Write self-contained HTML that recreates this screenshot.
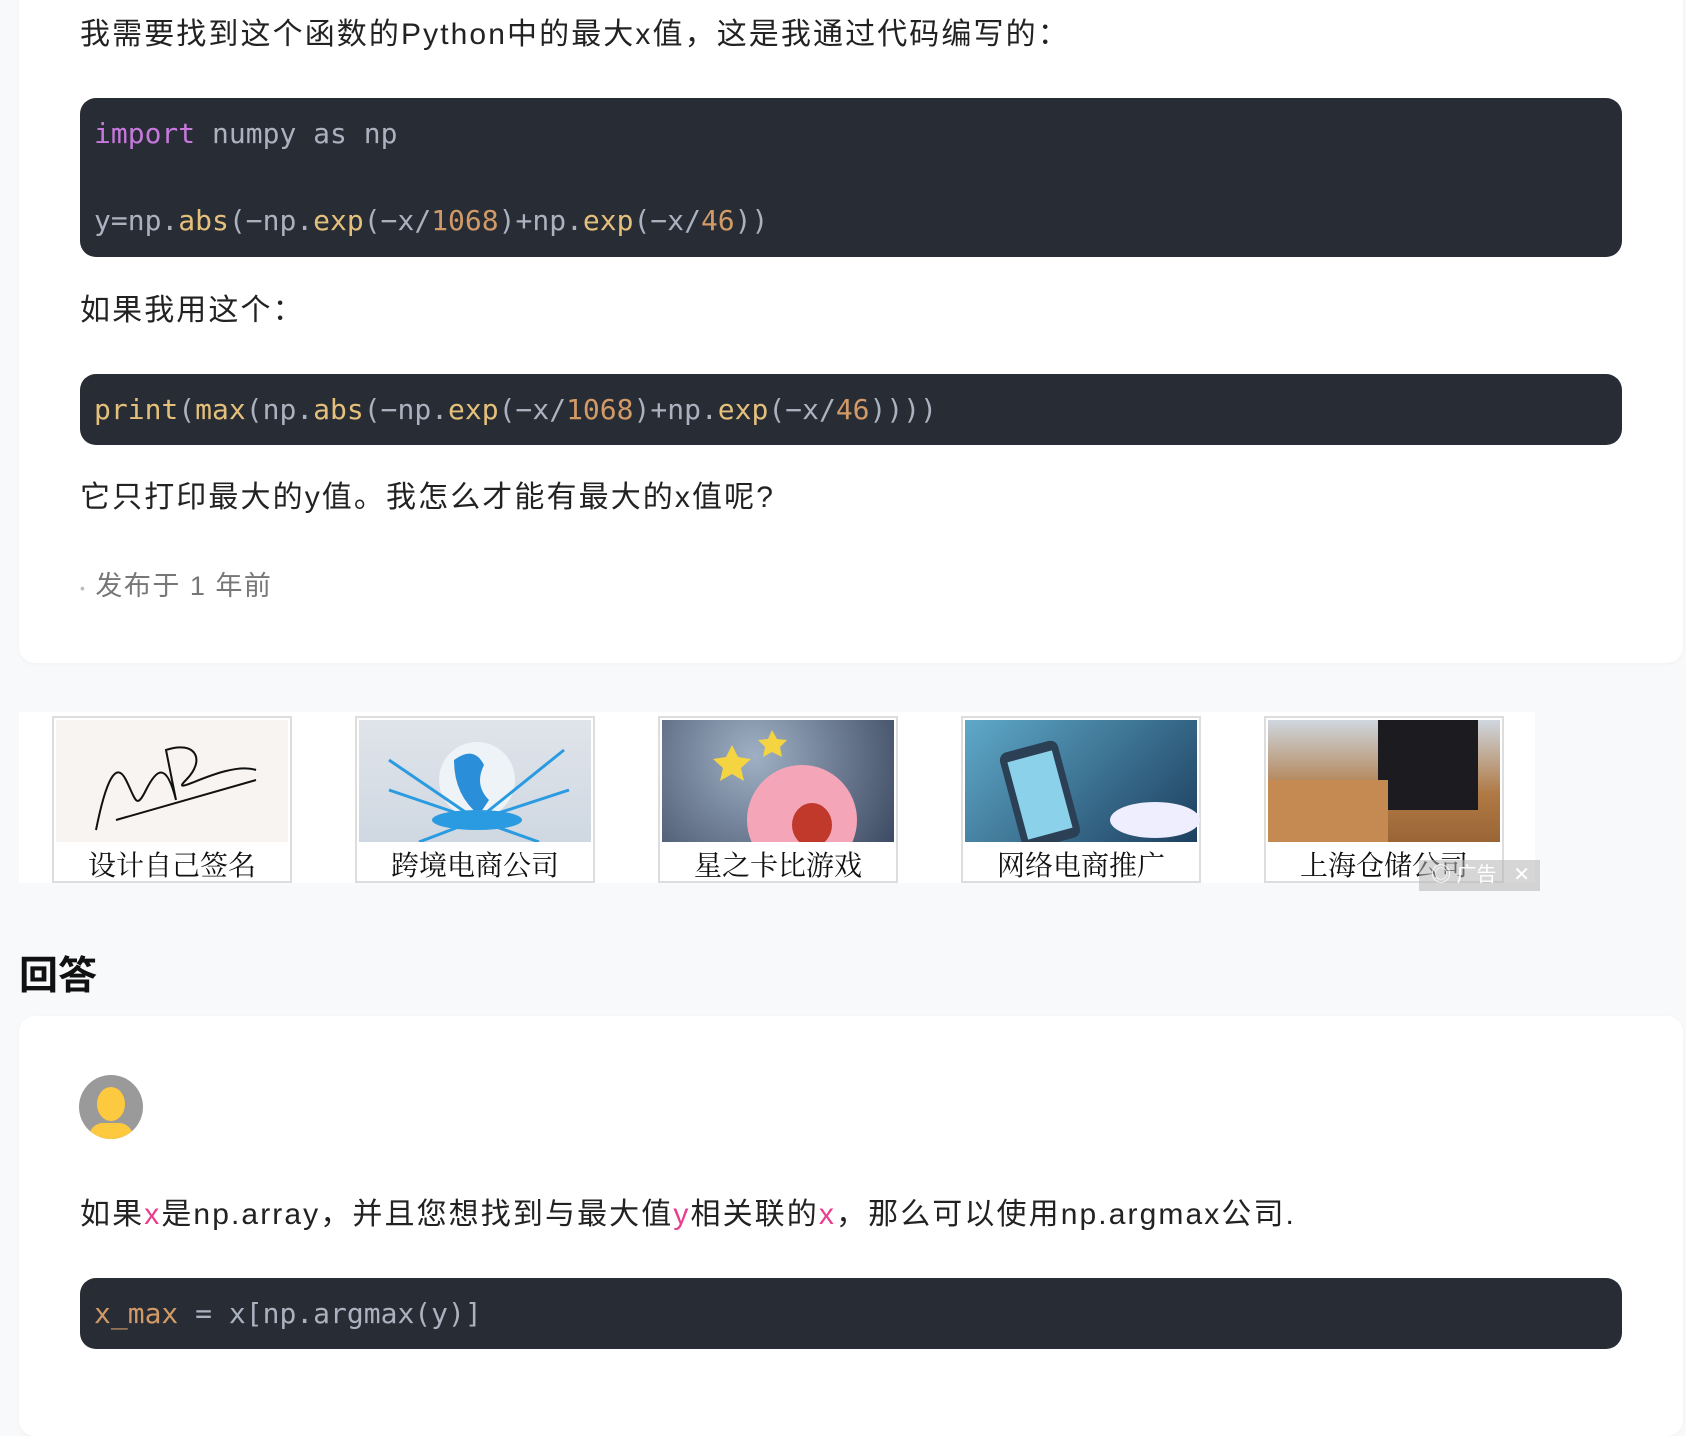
<!DOCTYPE html>
<html><head><meta charset="utf-8"><style>
*{margin:0;padding:0;box-sizing:border-box}
body{width:1686px;height:1370px;background:#f8f9fb;position:relative;overflow:hidden;font-family:"Liberation Sans","Noto Sans CJK SC",sans-serif;color:#222}
.card{position:absolute;left:19px;width:1664px;background:#fff;border-radius:16px;box-shadow:0 1px 4px rgba(0,0,0,.04)}
.t{position:absolute;left:80px;font-size:30px;line-height:40px;white-space:nowrap;letter-spacing:2.1px}
.code{position:absolute;left:80px;width:1542px;background:#282c34;border-radius:16px;font-family:"DejaVu Sans Mono","Liberation Mono",monospace;font-size:28px;color:#abb2bf;white-space:pre}
.code div{position:absolute;left:14px}
.k{color:#c678dd}.f{color:#e5c07b}.n{color:#d19a66}.o{color:#d19a66}
.ad{position:absolute;top:716px;width:240px;height:167px;border:2px solid #ddd;background:#fff}
.ad .img{position:absolute;left:2px;top:2px;right:2px;height:122px}
.ad .l{position:absolute;left:0;right:0;top:128px;text-align:center;font-family:"Noto Serif CJK SC",serif;font-size:28px;line-height:36px;color:#111}
.pk{color:#e83e8c}
</style></head><body>
<div class="card" style="top:-20px;height:683px"></div>
<div class="t" style="top:15px">我需要找到这个函数的Python中的最大x值，这是我通过代码编写的：</div>
<div class="code" style="top:98px;height:159px">
<div style="top:19px"><span class="k">import</span> numpy as np</div>
<div style="top:106px">y=np.<span class="f">abs</span>(−np.<span class="f">exp</span>(−x/<span class="n">1068</span>)+np.<span class="f">exp</span>(−x/<span class="n">46</span>))</div>
</div>
<div class="t" style="top:291px">如果我用这个：</div>
<div class="code" style="top:374px;height:71px">
<div style="top:19px"><span class="f">print</span>(<span class="f">max</span>(np.<span class="f">abs</span>(−np.<span class="f">exp</span>(−x/<span class="n">1068</span>)+np.<span class="f">exp</span>(−x/<span class="n">46</span>))))</div>
</div>
<div class="t" style="top:478px">它只打印最大的y值。我怎么才能有最大的x值呢?</div>
<div class="t" style="top:566px;left:80px;font-size:27px;color:#777;letter-spacing:1.5px"><span style="font-size:14px;color:#bbb;vertical-align:middle">•</span> 发布于 1 年前</div>

<div style="position:absolute;left:19px;top:712px;width:1516px;height:171px;background:#fff"></div>
<div class="ad" style="left:52px"><div class="img" style="background:#f7f4f1"><svg width="236" height="122"><path d="M40 110 C50 60 60 40 70 60 S80 90 90 70 S110 40 120 80 L110 30 C140 20 150 40 130 60 S170 40 200 50 M60 100 L200 60" stroke="#111" stroke-width="2" fill="none"/></svg></div><div class="l">设计自己签名</div></div>
<div class="ad" style="left:355px"><div class="img" style="background:linear-gradient(#e0e4ea,#cfd8e2)"><svg width="236" height="122"><circle cx="118" cy="60" r="38" fill="#eef3f7"/><path d="M95 40 q20-15 30 5 q-10 20 5 35 l-10 15 q-25-20-25-55z" fill="#2a8fd8"/><ellipse cx="118" cy="100" rx="45" ry="10" fill="#2a9be0"/><g stroke="#2a9be0" stroke-width="3"><path d="M118 100 L30 70 M118 100 L210 70 M118 100 L60 122 M118 100 L180 122 M118 100 L30 40 M118 100 L205 30"/></g></svg></div><div class="l">跨境电商公司</div></div>
<div class="ad" style="left:658px"><div class="img" style="background:radial-gradient(circle at 40% 30%,#9fb0c4,#3d4a63)"><svg width="236" height="122"><circle cx="140" cy="100" r="55" fill="#f4a6b8"/><ellipse cx="150" cy="105" rx="20" ry="22" fill="#c0392b"/><path d="M70 25 l6 12 13 2-10 9 3 13-12-7-12 7 3-13-10-9 13-2z M110 10 l5 9 10 1-7 7 2 10-10-5-9 5 2-10-7-7 10-1z" fill="#f5d442"/></svg></div><div class="l">星之卡比游戏</div></div>
<div class="ad" style="left:961px"><div class="img" style="background:linear-gradient(135deg,#5fa9c9,#1d3f5f)"><svg width="236" height="122"><rect x="45" y="25" width="60" height="100" rx="8" fill="#2b3f55" transform="rotate(-15 75 75)"/><rect x="52" y="35" width="46" height="80" fill="#8cd1ea" transform="rotate(-15 75 75)"/><ellipse cx="190" cy="100" rx="45" ry="18" fill="#eef"/></svg></div><div class="l">网络电商推广</div></div>
<div class="ad" style="left:1264px"><div class="img" style="background:linear-gradient(#cfd7df,#b07a45 60%,#9a6535)"><svg width="236" height="122"><rect x="110" y="0" width="100" height="90" fill="#1c1c20"/><rect x="0" y="60" width="120" height="62" fill="#c48a52"/></svg></div><div class="l">上海仓储公司</div></div>
<div style="position:absolute;left:1419px;top:860px;width:121px;height:31px;background:rgba(180,180,180,.55);color:#fff;font-size:20px;line-height:31px;padding-left:12px">◎ 广告 <span style="position:absolute;right:10px">✕</span></div>

<div style="position:absolute;left:19px;top:954px;font-size:39px;font-weight:bold;line-height:46px;color:#111">回答</div>
<div class="card" style="top:1016px;height:420px"></div>
<div style="position:absolute;left:79px;top:1075px;width:64px;height:64px;border-radius:50%;background:#9a9a9a;overflow:hidden"><div style="position:absolute;left:18px;top:12px;width:28px;height:34px;border-radius:50%;background:#fdc93e"></div><div style="position:absolute;left:10px;top:48px;width:44px;height:30px;border-radius:14px 14px 0 0;background:#fdc93e"></div></div>
<div class="t" style="top:1195px">如果<span class="pk">x</span>是np.array，并且您想找到与最大值<span class="pk">y</span>相关联的<span class="pk">x</span>，那么可以使用np.argmax公司.</div>
<div class="code" style="top:1278px;height:71px">
<div style="top:19px"><span class="o">x_max</span> = x[np.argmax(y)]</div>
</div>
</body></html>
